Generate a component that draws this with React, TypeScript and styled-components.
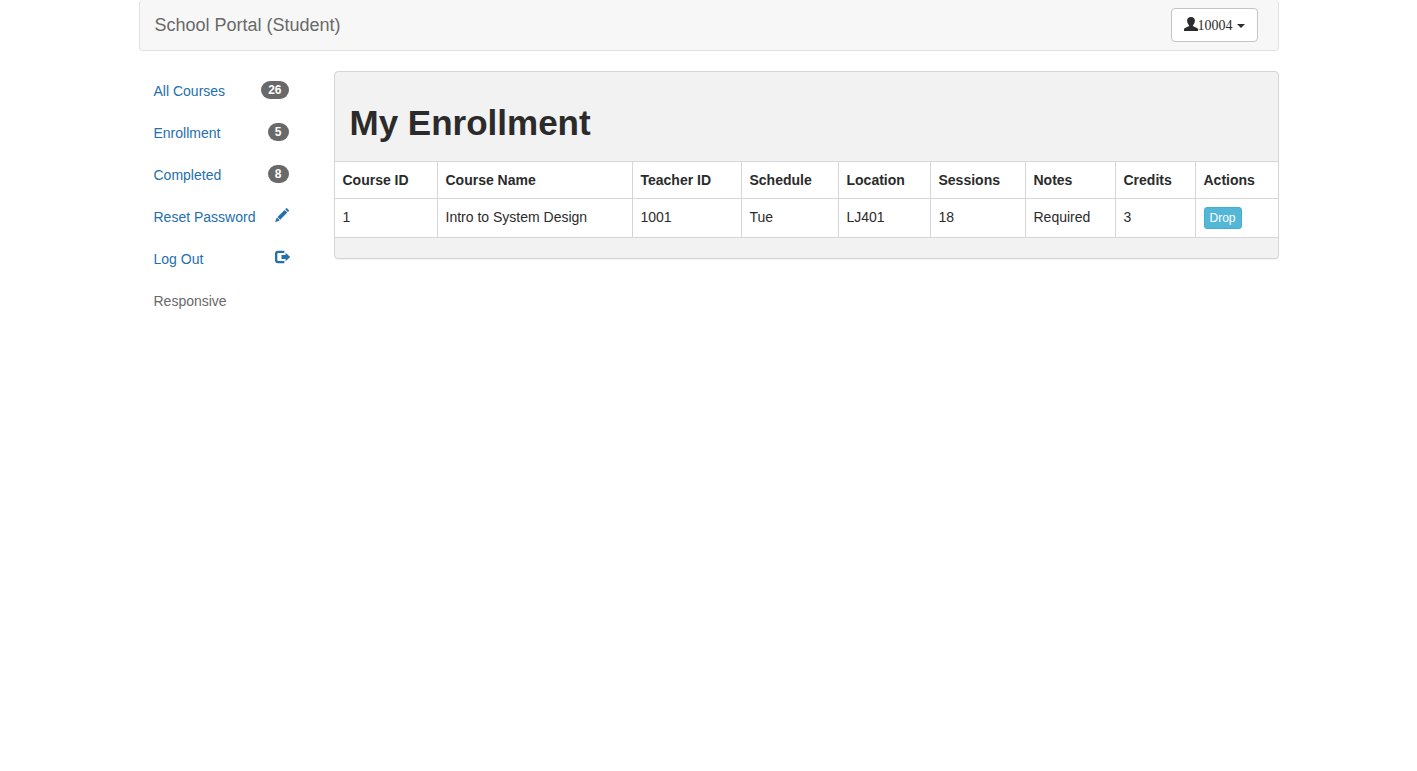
import React from "react";
import styled, { createGlobalStyle } from "styled-components";

const GlobalStyle = createGlobalStyle`
  *, *::before, *::after { box-sizing: border-box; }
  body {
    margin: 0;
    background: #ffffff;
    color: #2b2b2b;
    font-family: "Liberation Sans", Arial, sans-serif;
    font-size: 14px;
    line-height: 20px;
  }
`;

const Container = styled.div`
  max-width: 1140px;
  margin: 0 auto;
`;

const Navbar = styled.header`
  display: flex;
  align-items: center;
  justify-content: space-between;
  padding: 8px 20px 8px 15px;
  margin-bottom: 20px;
  background: #f7f7f7;
  border: 1px solid #e1e1e1;
  border-top: 0;
  border-radius: 4px;
`;

const Brand = styled.a`
  color: #696969;
  font-size: 18px;
  text-decoration: none;
`;

const UserButton = styled.button`
  display: flex;
  align-items: flex-start;
  padding: 8px 12px 6px;
  background: #ffffff;
  border: 1px solid #c4c4c4;
  border-radius: 4px;
  color: #2b2b2b;
  font-family: "Liberation Serif", "Times New Roman", serif;
  font-size: 14px;
  line-height: 18px;
  cursor: pointer;
`;

const Caret = styled.span`
  align-self: center;
  margin-left: 4px;
  border-top: 4px solid currentColor;
  border-left: 4px solid transparent;
  border-right: 4px solid transparent;
`;

const Icon = styled.svg`
  display: block;
  flex: none;
  width: 14px;
  height: 14px;
  overflow: visible;
  fill: currentColor;
`;

const Columns = styled.div`
  display: grid;
  grid-template-columns: 165px minmax(0, 1fr);
  gap: 30px;
  align-items: start;
`;

const NavList = styled.ul`
  display: flex;
  flex-direction: column;
  gap: 2px;
  margin: 0;
  padding: 0;
  list-style: none;
`;

const NavLink = styled.a<{ $muted?: boolean }>`
  display: flex;
  align-items: flex-start;
  justify-content: space-between;
  height: 40px;
  padding: 10px 15px;
  color: ${(p) => (p.$muted ? "#696969" : "#246fae")};
  text-decoration: none;
  white-space: nowrap;

  svg {
    margin-top: 1px;
  }
`;

const Badge = styled.span`
  padding: 3px 7px;
  background: #696969;
  border-radius: 10px;
  color: #ffffff;
  font-size: 12px;
  font-weight: 700;
  line-height: 12px;
`;

const Panel = styled.section`
  background: #f2f2f2;
  border: 1px solid #d6d6d6;
  border-radius: 4px;
  box-shadow: 0 1px 1px rgba(0, 0, 0, 0.05);
`;

const PanelHeading = styled.div`
  padding: 31px 15px 18px;
`;

const Title = styled.h1`
  margin: 0;
  font-size: 35px;
  font-weight: 700;
  line-height: 40px;
`;

const PanelFooter = styled.div`
  height: 20px;
`;

const Table = styled.table`
  width: 100%;
  table-layout: fixed;
  border-collapse: separate;
  border-spacing: 0;
  background: #ffffff;
  border-top: 1px solid #d6d6d6;

  th,
  td {
    padding: 8px;
    border-bottom: 1px solid #d6d6d6;
    border-right: 1px solid #d6d6d6;
    text-align: left;
    vertical-align: top;
  }

  th:last-child,
  td:last-child {
    border-right: 0;
  }
`;

const Col = styled.col<{ $width: number }>`
  width: ${(p) => p.$width}px;
`;

const DropButton = styled.button`
  display: block;
  height: 22px;
  padding: 0 5px;
  background: #54b7d8;
  border: 1px solid #42aed2;
  border-radius: 3px;
  color: #ffffff;
  font-family: inherit;
  font-size: 12px;
  line-height: 18px;
  cursor: pointer;
`;

const UserIcon = () => (
  <Icon viewBox="0 0 14 14" aria-hidden="true">
    <path d="M7 0C4.500 0 3.100 1.500 3.100 3.600C3.100 5.400 3.800 7.100 4.900 8.100C5.300 8.500 5.200 9.100 4.700 9.300L1 10.900C.3 11.200 0 11.700 0 12.400V14H14V12.400C14 11.700 13.700 11.200 13 10.900L9.300 9.300C8.800 9.100 8.700 8.500 9.100 8.100C10.200 7.100 10.900 5.400 10.900 3.600C10.900 1.500 9.500 0 7 0Z" />
  </Icon>
);

const PencilIcon = () => (
  <Icon viewBox="0 0 14 14" aria-hidden="true">
    <path d="M11.200.3Q11.600-.1 12 .3L13.900 2.200Q14.300 2.600 13.900 3L12.900 4L10.200 1.300ZM9.600 1.900L12.300 4.600L5.200 11.700L2.500 9ZM2 9.600L4.600 12.200L3.900 12.700L0 14.200L1.500 10.300Z" />
  </Icon>
);

const LogOutIcon = () => (
  <Icon viewBox="0 0 14 14" aria-hidden="true">
    <path d="M9.300.8V3H3.400Q2.300 3 2.300 4.100V10Q2.300 11.100 3.400 11.100H9.300V13.300H3Q0 13.300 0 10.300V3.800Q0 .8 3 .8ZM10.600 2.800L15.200 7L10.600 11.200V9H6.500V5H10.600Z" />
  </Icon>
);

const navItems = [
  { label: "All Courses", extra: <Badge>26</Badge> },
  { label: "Enrollment", extra: <Badge>5</Badge> },
  { label: "Completed", extra: <Badge>8</Badge> },
  { label: "Reset Password", extra: <PencilIcon /> },
  { label: "Log Out", extra: <LogOutIcon /> },
  { label: "Responsive", muted: true },
];

const columns = [
  { label: "Course ID", width: 103 },
  { label: "Course Name", width: 195 },
  { label: "Teacher ID", width: 109 },
  { label: "Schedule", width: 97 },
  { label: "Location", width: 92 },
  { label: "Sessions", width: 95 },
  { label: "Notes", width: 90 },
  { label: "Credits", width: 80 },
  { label: "Actions", width: 82 },
];

const courses = [
  ["1", "Intro to System Design", "1001", "Tue", "LJ401", "18", "Required", "3"],
];

export default function App() {
  return (
    <>
      <GlobalStyle />
      <Container>
        <Navbar>
          <Brand href="#">School Portal (Student)</Brand>
          <UserButton type="button" aria-haspopup="menu">
            <UserIcon />
            10004
            <Caret />
          </UserButton>
        </Navbar>
        <Columns>
          <nav aria-label="Student menu">
            <NavList>
              {navItems.map((item) => (
                <li key={item.label}>
                  <NavLink href="#" $muted={item.muted}>
                    {item.label}
                    {item.extra}
                  </NavLink>
                </li>
              ))}
            </NavList>
          </nav>
          <Panel>
            <PanelHeading>
              <Title>My Enrollment</Title>
            </PanelHeading>
            <Table>
              <colgroup>
                {columns.map((c) => (
                  <Col key={c.label} $width={c.width} />
                ))}
              </colgroup>
              <thead>
                <tr>
                  {columns.map((c) => (
                    <th key={c.label} scope="col">
                      {c.label}
                    </th>
                  ))}
                </tr>
              </thead>
              <tbody>
                {courses.map((course) => (
                  <tr key={course[0]}>
                    {course.map((value, i) => (
                      <td key={columns[i].label}>{value}</td>
                    ))}
                    <td>
                      <DropButton type="button">Drop</DropButton>
                    </td>
                  </tr>
                ))}
              </tbody>
            </Table>
            <PanelFooter />
          </Panel>
        </Columns>
      </Container>
    </>
  );
}
